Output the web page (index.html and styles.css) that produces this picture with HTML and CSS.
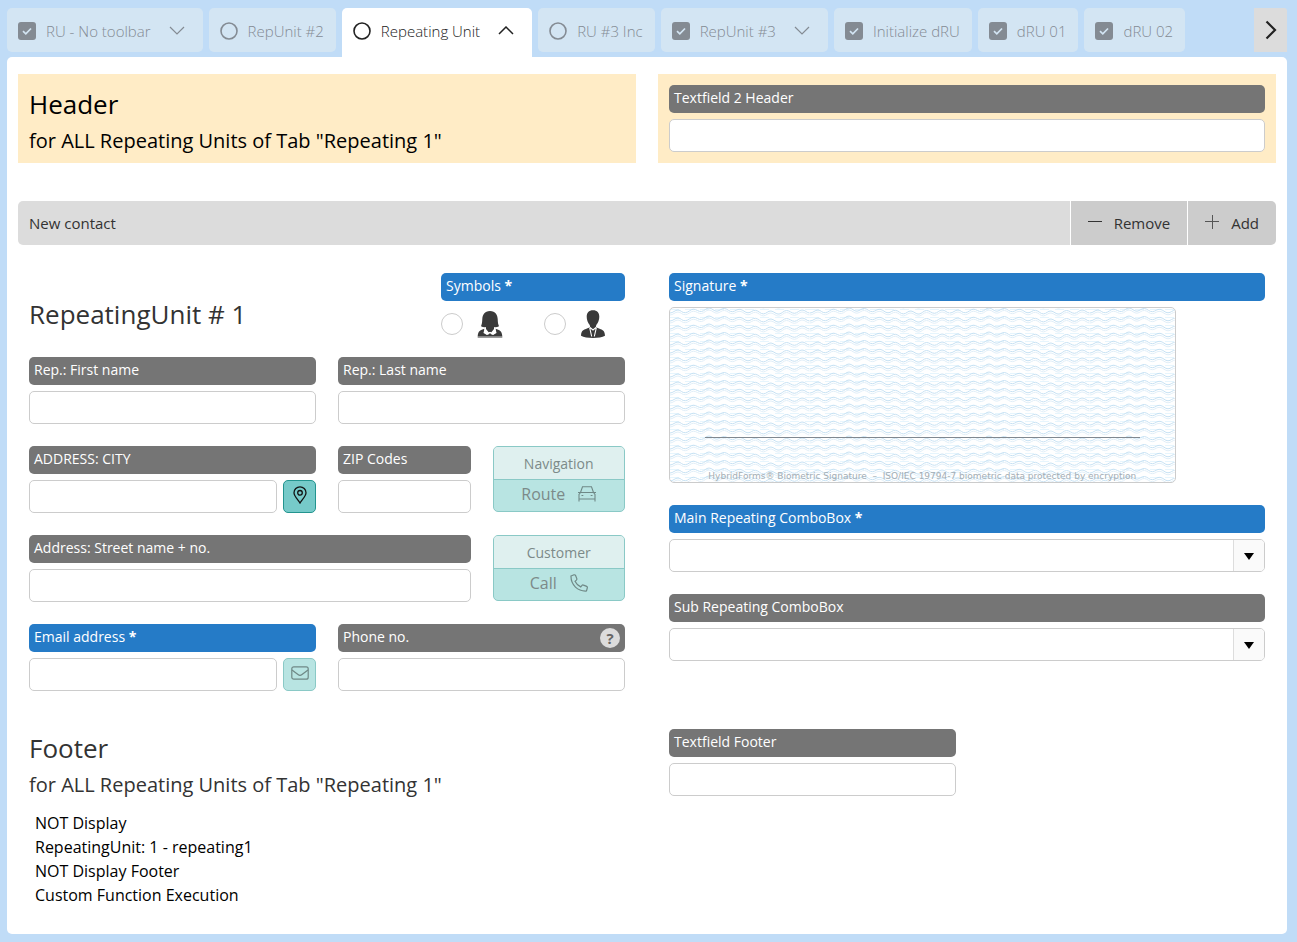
FILE: index.html
```html
<!DOCTYPE html>
<html lang="en">
<head>
<meta charset="utf-8">
<meta name="viewport" content="width=device-width, initial-scale=1">
<title>Repeating Unit</title>
<link rel="stylesheet" href="styles.css">
</head>
<body>
<svg class="defs" aria-hidden="true">
  <symbol id="i-check" viewBox="0 0 18 18"><rect width="18" height="18" rx="3" fill="currentColor"/><path d="M5 9.200l2.800 2.600 5.200-5.300" fill="none" stroke="#d3e5f3" stroke-width="1.700"/></symbol>
  <symbol id="i-circle" viewBox="0 0 18 18"><circle cx="9" cy="9" r="8" fill="none" stroke="currentColor" stroke-width="1.6"/></symbol>
  <symbol id="i-down" viewBox="0 0 16 10"><path d="M1 1l7 7 7-7" fill="none" stroke="currentColor" stroke-width="1.2"/></symbol>
  <symbol id="i-up" viewBox="0 0 16 10"><path d="M1 8l7-7 7 7" fill="none" stroke="currentColor" stroke-width="1.5"/></symbol>
</svg>
<nav class="tabs" role="tablist">
  <button class="tab" role="tab"><svg class="mark"><use href="#i-check"/></svg><span>RU - No toolbar</span><svg class="chev"><use href="#i-down"/></svg></button>
  <button class="tab" role="tab"><svg class="mark"><use href="#i-circle"/></svg><span>RepUnit #2</span></button>
  <button class="tab active" role="tab" aria-selected="true"><svg class="mark"><use href="#i-circle"/></svg><span>Repeating Unit</span><svg class="chev"><use href="#i-up"/></svg></button>
  <button class="tab" role="tab"><svg class="mark"><use href="#i-circle"/></svg><span>RU #3 Inc</span></button>
  <button class="tab" role="tab"><svg class="mark"><use href="#i-check"/></svg><span>RepUnit #3</span><svg class="chev"><use href="#i-down"/></svg></button>
  <button class="tab" role="tab"><svg class="mark"><use href="#i-check"/></svg><span>Initialize dRU</span></button>
  <button class="tab" role="tab"><svg class="mark"><use href="#i-check"/></svg><span>dRU 01</span></button>
  <button class="tab" role="tab"><svg class="mark"><use href="#i-check"/></svg><span>dRU 02</span></button>
  <button class="next" aria-label="Next tabs"><svg width="12" height="20" viewBox="0 0 12 20"><path d="M1.500 1.500L10 10l-8.500 8.500" fill="none" stroke="#222" stroke-width="2.2"/></svg></button>
</nav>
<main class="panel">
  <header class="halves">
    <div class="card card-text">
      <h1 class="title">Header</h1>
      <p class="subtitle">for ALL Repeating Units of Tab "Repeating 1"</p>
    </div>
    <div class="card">
      <div class="field"><label class="label" for="h2">Textfield 2 Header</label><input class="input" id="h2" type="text"></div>
    </div>
  </header>

  <div class="toolbar">
    <span class="toolbar-name">New contact</span>
    <button class="tool"><svg width="14" height="16" viewBox="0 0 14 16"><path d="M0 6.500h14" stroke="#333" stroke-width="1"/></svg>Remove</button>
    <button class="tool"><svg width="14" height="16" viewBox="0 0 14 16"><path d="M0 6.500h14M7.500 0v14" stroke="#555" stroke-width="1"/></svg>Add</button>
  </div>

  <section class="halves unit">
    <div class="column">
      <div class="row intro">
        <h2 class="title span-8">RepeatingUnit # 1</h2>
        <fieldset class="field span-4">
          <legend class="label required">Symbols <b>*</b></legend>
          <div class="options">
            <label class="option"><input class="radio" type="radio" name="symbol" aria-label="Woman">
              <svg width="26" height="28" viewBox="0 0 26 28" fill="#3a3a3a"><path d="M13 1C7.500 1 5.500 5 5.300 9c-.1 3-.3 5-1.300 7.200 1.500 1 3.500 1.300 5 .9v2L13 24l4-4.900v-2c1.500.4 3.500.1 5-.9-1-2.200-1.200-4.200-1.300-7.200C20.500 5 18.500 1 13 1z"/><path d="M7.500 18.800C3.500 20 1 21 .7 26.300h24.600c-.3-5.300-2.800-6.300-6.800-7.500l1 4.200-3.500 2-3-1.200L10 25l-3.500-2z"/><path d="M8.500 18l-1.200 4.200 2.500 1.800 3.200-1.800 3.200 1.800 2.500-1.800-1.200-4.200" fill="none" stroke="#fff"/><path d="M.7 27h24.600" stroke="#3a3a3a" stroke-width="1"/></svg>
            </label>
            <label class="option"><input class="radio" type="radio" name="symbol" aria-label="Man">
              <svg width="26" height="28" viewBox="0 0 26 28" fill="#3a3a3a"><path d="M13 .2C8.800.2 6.700 2.800 6.700 6.700c0 3 1.200 6 3 8.300l.8 3.200L13 20l2.500-1.800.8-3.200c1.800-2.300 3-5.300 3-8.300C19.300 2.800 17.200.2 13 .2z"/><path d="M9.500 17.500C4 20 1.200 19.500 1 25.800 6 28.700 20 28.700 25 25.800c-.2-6.300-3-5.800-8.500-8.300L13 19z"/><path d="M9.700 17.800l2 8.700M16.300 17.800l-2 8.700M10 17.500l3 2.500 3-2.500" fill="none" stroke="#fff" stroke-width="1.100"/></svg>
            </label>
          </div>
        </fieldset>
      </div>
      <div class="row">
        <div class="field span-6"><label class="label" for="first">Rep.: First name</label><input class="input" id="first" type="text"></div>
        <div class="field span-6"><label class="label" for="last">Rep.: Last name</label><input class="input" id="last" type="text"></div>

        <div class="field span-6"><label class="label" for="city">ADDRESS: CITY</label>
          <div class="with-button"><input class="input" id="city" type="text"><button class="square" aria-label="Locate"><svg width="14" height="18" viewBox="0 0 14 18" fill="none" stroke="#111" stroke-width="1.300"><path d="M7 17C5.500 14 1 10.500 1 6.800a6 6 0 0112 0C13 10.500 8.500 14 7 17z"/><circle cx="7" cy="6.800" r="2.300"/></svg></button></div></div>
        <div class="field span-3"><label class="label" for="zip">ZIP Codes</label><input class="input" id="zip" type="text"></div>
        <div class="action span-3"><span class="action-head">Navigation</span>
          <button class="action-go" disabled>Route<svg width="18" height="16" viewBox="0 0 18 16" fill="none" stroke="#6f8886" stroke-width="1.100"><path d="M2.500 6.500L4.500.8h9l2 5.700M1 15.500V8.500l1.500-2h13l1.500 2v7M1 13h16M0 6.500h2.500M15.500 6.500H18M3.500 9.500h1.800M12.700 9.500h1.800"/></svg></button></div>

        <div class="field span-9"><label class="label" for="street">Address: Street name + no.</label><input class="input" id="street" type="text"></div>
        <div class="action span-3"><span class="action-head">Customer</span>
          <button class="action-go" disabled>Call<svg width="18" height="18" viewBox="0 0 18 18" fill="none" stroke="#6f8886" stroke-width="1.200"><path d="M1 2l3-1.200c.8-.2 1.300 0 1.600.7L6.800 4.600c.2.600 0 1.100-.4 1.500L5 7.300c1.200 2.500 3 4.300 5.700 5.600l1.300-1.500c.4-.5.9-.6 1.500-.3l3.200 1.300c.6.3.8.8.6 1.500L16.500 17C8 17.500.700 11 1 2z"/></svg></button></div>

        <div class="field span-6"><label class="label required" for="mail">Email address <b>*</b></label>
          <div class="with-button"><input class="input" id="mail" type="email"><button class="square off" disabled aria-label="Send mail"><svg width="18" height="14" viewBox="0 0 18 14" fill="none" stroke="#6f8886" stroke-width="1.200"><rect x=".8" y=".8" width="16.400" height="12.400" rx="2"/><path d="M1 4l6 4.600c1.300 1 2.700 1 4 0L17 4"/></svg></button></div></div>
        <div class="field span-6"><div class="label has-help"><label for="phone">Phone no.</label><button class="help" aria-label="Help">?</button></div><input class="input" id="phone" type="tel"></div>
      </div>
    </div>

    <div class="column stack">
      <div class="field">
        <span class="label required">Signature <b>*</b></span>
        <div class="signature">
          <svg class="waves" aria-hidden="true">
            <defs>
              <path id="wave" d="M0 5c3 0 5-3 8-3s4 3.200 7.500 2.700 5-3.500 8-3.500 5 2.800 8 2.300 4.500-3.500 7.500-3.500 5 3.500 8 3.200 4.500-3 7.500-2.700 5 3.500 8 3.200 4.500-2.700 7.500-2.400 5 3.500 8 3.500 4.500-2.800 7.500-2.500 5 3.800 8 3.600 4.500-3.200 7.500-2.900 5 3.500 8 3.100 4.500-3.500 7.500-3.600 5 2.900 8 2.800 4.500-3.200 7.500-3.300 5 3 7.500 3"/>
              <pattern id="sea" width="140" height="8" patternUnits="userSpaceOnUse">
                <g fill="none">
                  <path d="M0 1.500h140" stroke="#e6f5fd" stroke-dasharray="9 6"/>
                  <g stroke="#c6e1f3" stroke-width="1"><use href="#wave" y="-8"/><use href="#wave"/><use href="#wave" y="8"/></g>
                  <g stroke="#e0eef8" stroke-width="1"><use href="#wave" y="-6"/><use href="#wave" y="2"/><use href="#wave" y="-14"/></g>
                </g>
              </pattern>
            </defs>
            <rect width="100%" height="100%" fill="url(#sea)"/>
          </svg>
          <div class="sign-area"><hr class="sign-line"><p class="sign-note">HybridForms® Biometric Signature &nbsp;–&nbsp; ISO/IEC 19794-7 biometric data protected by encryption</p></div>
        </div>
      </div>
      <div class="field"><label class="label required" for="main">Main Repeating ComboBox <b>*</b></label>
        <div class="combo"><select class="input" id="main"><option></option></select><span class="combo-arrow"><svg width="10" height="8" viewBox="0 0 10 8"><path d="M0 1h10L5 8z"/></svg></span></div></div>
      <div class="field"><label class="label" for="sub">Sub Repeating ComboBox</label>
        <div class="combo"><select class="input" id="sub"><option></option></select><span class="combo-arrow"><svg width="10" height="8" viewBox="0 0 10 8"><path d="M0 1h10L5 8z"/></svg></span></div></div>
    </div>
  </section>

  <footer class="halves">
    <div class="column">
      <h2 class="title">Footer</h2>
      <p class="subtitle">for ALL Repeating Units of Tab "Repeating 1"</p>
      <ul class="notes"><li>NOT Display</li><li>RepeatingUnit: 1 - repeating1</li><li>NOT Display Footer</li><li>Custom Function Execution</li></ul>
    </div>
    <div class="column">
      <div class="row"><div class="field span-6"><label class="label" for="foot">Textfield Footer</label><input class="input" id="foot" type="text"></div></div>
    </div>
  </footer>
</main>
</body>
</html>
```
FILE: styles.css
```css
* { box-sizing: border-box; }

body {
  margin: 0;
  min-height: 100vh;
  display: flex;
  flex-direction: column;
  padding: 8px 10px 8px 7px;
  background: #c0dcf7;
  color: #333;
  font: 15px "Open Sans", sans-serif;
}

h1, h2, p, ul { margin: 0; padding: 0; font-weight: 400; }
button { border: 0; padding: 0; font: inherit; color: inherit; }
svg { flex: none; display: block; }
.defs { width: 0; height: 0; position: absolute; }

/* Tabs */
.tabs { display: flex; gap: 6px; }
.tab {
  display: flex;
  align-items: center;
  gap: 10px;
  height: 44px;
  margin-bottom: 5px;
  padding: 2px 12px 0 11px;
  border-radius: 5px;
  background: #d3e5f3;
  color: #848b93;
  font-weight: 300;
  white-space: nowrap;
}
.tab.active {
  height: 49px;
  margin-bottom: 0;
  padding-bottom: 5px;
  border-radius: 5px 5px 0 0;
  background: #fff;
  color: #222;
}
.mark { width: 18px; height: 18px; }
.chev { width: 16px; height: 10px; margin: 0 6px 0 8px; }
.next {
  display: grid;
  place-items: center;
  width: 33px;
  height: 44px;
  margin-left: auto;
  background: #dcdcdc;
  border-radius: 0 3px 0 0;
}

/* Page panel */
.panel {
  flex: 1;
  padding: 17px 11px;
  background: #fff;
  border-radius: 5px;
}
.halves { display: grid; grid-template-columns: 1fr 1fr; gap: 22px; }
.card { padding: 11px; background: #ffecc6; color: #000; }
.card-text { padding-bottom: 4px; }
.column { padding: 0 11px; min-width: 0; }
.title { font-size: 26px; line-height: 38px; }
.subtitle { font-size: 20px; line-height: 36px; }

.toolbar {
  display: flex;
  gap: 1px;
  height: 44px;
  margin: 38px 0 28px;
  line-height: 44px;
  border-radius: 5px;
  overflow: hidden;
}
.toolbar-name { flex: 1; padding-left: 11px; background: #dcdcdc; }
.tool {
  display: flex;
  align-items: center;
  gap: 12px;
  padding: 0 17px;
  background: #ccc;
}

/* Fields */
.row { display: grid; grid-template-columns: repeat(12, 1fr); gap: 22px; }
.intro { margin-bottom: 17px; }
.intro .title { align-self: end; padding-bottom: 7px; }
.span-3 { grid-column: span 3; }
.span-4 { grid-column: span 4; }
.span-6 { grid-column: span 6; }
.span-8 { grid-column: span 8; }
.span-9 { grid-column: span 9; }
.stack { display: flex; flex-direction: column; gap: 22px; }
.field { display: flex; flex-direction: column; gap: 6px; min-width: 0; }
fieldset.field { display: block; margin: 0; padding: 0; border: 0; }
.label {
  display: block;
  width: 100%;
  height: 28px;
  padding: 0 5px;
  border-radius: 5px;
  background: #757575;
  color: #fff;
  font-size: 14px;
  line-height: 26px;
  white-space: nowrap;
}
.label.required { background: #257bc7; }
.label b { font-weight: 700; }
.has-help { display: flex; justify-content: space-between; }
.help {
  align-self: center;
  width: 20px;
  height: 20px;
  border-radius: 50%;
  background: #dcdcdc;
  color: #666;
  font-size: 15px;
  font-weight: 700;
  line-height: 20px;
}
.input {
  width: 100%;
  min-width: 0;
  height: 33px;
  padding: 0 8px;
  border: 1px solid #ccc;
  border-radius: 5px;
  background: #fff;
  font: inherit;
}
.with-button { display: flex; gap: 6px; }
.square {
  flex: none;
  display: grid;
  place-items: center;
  width: 33px;
  height: 33px;
  padding-bottom: 3px;
  border: 1px solid #23948f;
  border-radius: 5px;
  background: #76cac9;
}
.square.off { border-color: #8ac9c6; background: #b8e4e2; }

.options { display: flex; align-items: center; gap: 41px; height: 33px; margin-top: 6px; }
.option { display: flex; align-items: center; gap: 14px; }
.radio {
  appearance: none;
  width: 22px;
  height: 22px;
  margin: 0;
  border: 1px solid #ccc;
  border-radius: 50%;
  background: #fff;
}

.action {
  display: flex;
  flex-direction: column;
  height: 66px;
  border: 1px solid #8ac9c6;
  border-radius: 5px;
  background: #b8e4e2;
  color: #7c8a89;
  text-align: center;
  overflow: hidden;
}
.action-head {
  height: 33px;
  background: #dff0ef;
  border-bottom: 1px solid #8ac9c6;
  font-size: 14px;
  line-height: 34px;
}
.action-go {
  flex: 1;
  display: flex;
  justify-content: center;
  align-items: center;
  gap: 13px;
  padding-bottom: 4px;
  background: none;
  font-size: 16px;
}

.combo { display: grid; }
.combo > * { grid-area: 1 / 1; }
.combo select { appearance: none; }
.combo-arrow {
  display: grid;
  place-items: center;
  justify-self: end;
  width: 31px;
  margin: 1px;
  border-left: 1px solid #ddd;
  border-radius: 0 4px 4px 0;
  background: #fafafa;
  pointer-events: none;
}

.signature {
  display: grid;
  width: 85%;
  height: 176px;
  border: 1px solid #ccc;
  border-radius: 5px;
  overflow: hidden;
}
.signature > * { grid-area: 1 / 1; }
.waves { width: 100%; height: 100%; }
.sign-area { display: flex; flex-direction: column; justify-content: flex-end; padding: 0 35px; }
.sign-line { width: 100%; height: 1px; margin: 0 0 32px; border: 0; background: #808890; }
.sign-note {
  color: #a3adb4;
  font: 9px/12px "DejaVu Sans", sans-serif;
  text-align: center;
  white-space: nowrap;
}

footer.halves { margin-top: 38px; }
.notes { margin-top: 8px; padding-left: 6px; list-style: none; color: #000; font-size: 16px; line-height: 24px; }
```
